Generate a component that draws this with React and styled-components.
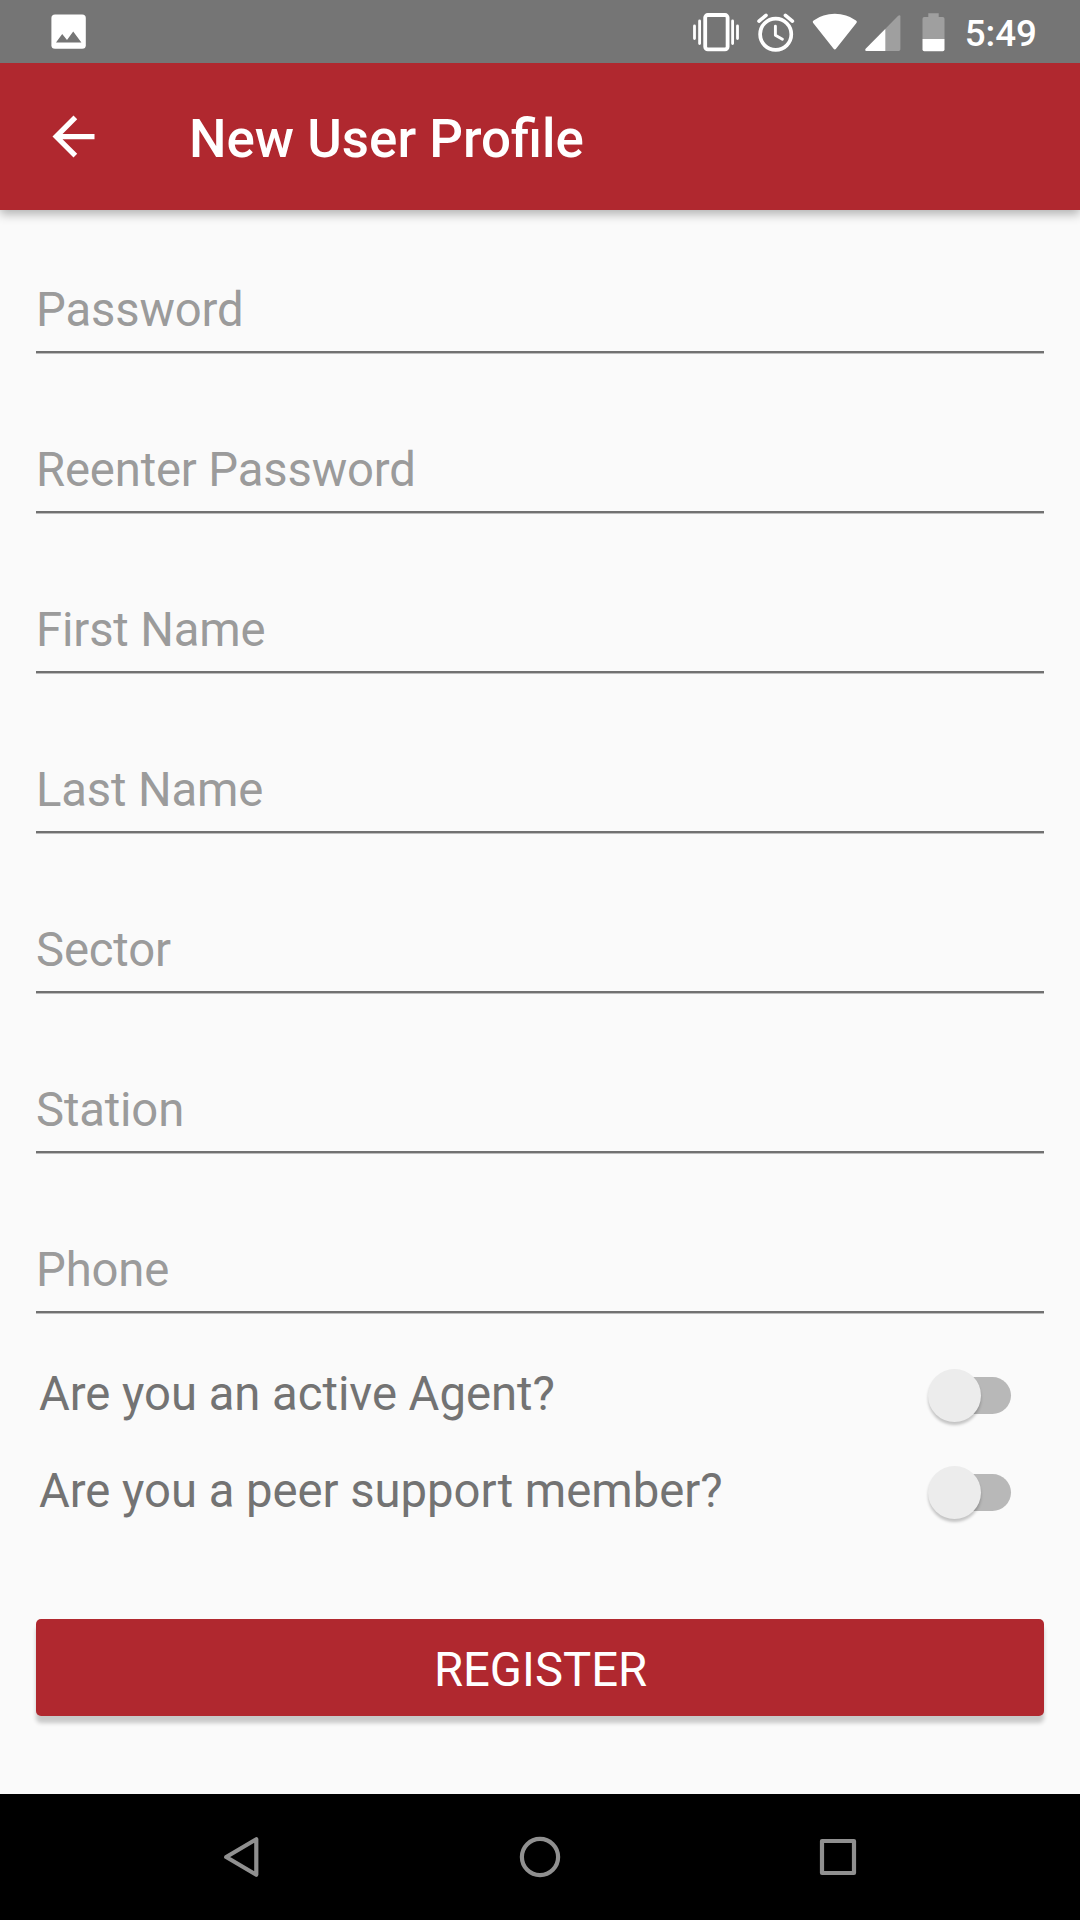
import React, { useState } from "react";
import styled, { createGlobalStyle } from "styled-components";

const GlobalStyle = createGlobalStyle`
  * {
    box-sizing: border-box;
  }

  body {
    margin: 0;
    background: #fafafa;
    font-family: Roboto, "Liberation Sans", sans-serif;
  }
`;

const Screen = styled.div`
  display: flex;
  flex-direction: column;
  width: 1080px;
  height: 1920px;
  overflow: hidden;
  background: #fafafa;
`;

const StatusBar = styled.div`
  position: relative;
  z-index: 1;
  display: flex;
  align-items: center;
  flex: none;
  height: 63px;
  padding: 0 43px 0 51px;
  background: #757575;

  svg {
    display: block;
    flex: none;
  }
`;

const StatusIcons = styled.div`
  display: flex;
  align-items: center;
  margin-left: auto;
`;

const AlarmSlot = styled.div`
  margin: 0 17px 0 18px;
`;

const SignalSlot = styled.div`
  margin: 0 21px 0 7px;
`;

const Clock = styled.span`
  margin-left: 20px;
  padding-top: 4px;
  color: #fff;
  font-size: 36.75px;
  font-weight: 500;
  line-height: 60px;
`;

const AppBar = styled.header`
  position: relative;
  display: flex;
  align-items: center;
  flex: none;
  height: 147px;
  padding-left: 42px;
  background: #b0282f;
  box-shadow: 0 4px 10px rgba(0, 0, 0, 0.3);
`;

const BackButton = styled.button`
  display: flex;
  width: 63px;
  height: 63px;
  padding: 0;
  border: none;
  background: transparent;
  cursor: pointer;
`;

const Title = styled.h1`
  margin: 0 0 0 84px;
  padding-top: 5px;
  color: #fff;
  font-size: 52.9px;
  font-weight: 500;
  line-height: 62px;
`;

const Form = styled.form`
  display: flex;
  flex-direction: column;
  flex: 1;
  padding: 54px 36px 0;
`;

const Fields = styled.div`
  display: flex;
  flex-direction: column;
  gap: 71px;
`;

const Field = styled.input`
  width: 100%;
  height: 89px;
  padding: 5px 0 0;
  border: none;
  border-bottom: 2px solid #717171;
  border-radius: 0;
  box-shadow: 0 1px 0 #bdbdbd;
  outline: none;
  background: transparent;
  color: #212121;
  font-family: inherit;
  font-size: 47.25px;
  letter-spacing: -0.16px;

  &::placeholder {
    color: #9b9b9b;
    opacity: 1;
  }
`;

const Toggles = styled.div`
  display: flex;
  flex-direction: column;
  gap: 13px;
  margin-top: 40px;
`;

const ToggleRow = styled.label`
  display: flex;
  align-items: center;
  justify-content: space-between;
  height: 84px;
  padding: 0 33px 0 3px;
`;

const ToggleLabel = styled.span`
  padding-bottom: 2px;
  color: #737373;
  font-size: 47.25px;
  line-height: 56px;
  letter-spacing: -0.03px;
`;

const Switch = styled.button`
  position: relative;
  width: 83px;
  height: 53px;
  padding: 0;
  border: none;
  background: transparent;
  cursor: pointer;

  &::before {
    content: "";
    position: absolute;
    top: 8px;
    left: 14px;
    right: 0;
    height: 37px;
    border-radius: 18.5px;
    background: ${(props) => (props.$on ? "#dc9a9e" : "#b8b8b8")};
  }

  &::after {
    content: "";
    position: absolute;
    top: 0;
    left: ${(props) => (props.$on ? "30px" : "0")};
    width: 53px;
    height: 53px;
    border-radius: 50%;
    background: ${(props) => (props.$on ? "#b0282f" : "#ececec")};
    box-shadow: 0 3px 3px rgba(0, 0, 0, 0.22);
  }
`;

const RegisterButton = styled.button`
  flex: none;
  height: 97px;
  margin-top: 85px;
  padding: 5px 0 0 1px;
  border: none;
  border-radius: 5px;
  background: #b0282f;
  box-shadow: 0 7px 4px rgba(0, 0, 0, 0.2);
  color: #fff;
  font-family: inherit;
  font-size: 47.25px;
  line-height: 56px;
  cursor: pointer;
`;

const NavBar = styled.nav`
  display: flex;
  align-items: center;
  justify-content: center;
  gap: 250px;
  flex: none;
  height: 126px;
  background: #000;
`;

const ImageIcon = () => (
  <svg width="35" height="35" viewBox="0 0 35 35">
    <rect x="0.4" y="0.4" width="34.4" height="34.4" rx="3.6" fill="#fff" />
    <path d="M5 28.4l6.2-8.4 4.8 6 6.2-8.6 8.2 11z" fill="#757575" />
  </svg>
);

const VibrateIcon = () => (
  <svg width="46" height="40" viewBox="0 0 46 40">
    <rect
      x="12.2"
      y="3"
      width="22.4"
      height="34.4"
      rx="2.6"
      fill="none"
      stroke="#fff"
      strokeWidth="3.8"
    />
    <path
      d="M1.5 14v12.6M6.6 9v22.6M39.6 9v22.6M44.5 14v12.6"
      stroke="#fff"
      strokeWidth="2.8"
      strokeLinecap="round"
    />
  </svg>
);

const AlarmIcon = () => (
  <svg width="38" height="40" viewBox="0 0 38 40">
    <g fill="none" stroke="#fff" strokeLinecap="round">
      <circle cx="18.7" cy="22.3" r="15.6" strokeWidth="3.7" />
      <path d="M2 9.2l7-5.9M28.4 3.3l7 5.9" strokeWidth="3.6" />
      <path d="M18.4 14.2v9l7 4.1" strokeWidth="2.9" strokeLinejoin="round" />
    </g>
  </svg>
);

const WifiIcon = () => (
  <svg width="46" height="40" viewBox="0 0 46 40">
    <path
      d="M1 10.8Q.2 9.4 1.6 8.4Q11 1.8 22.8 1.8Q34.6 1.8 44 8.4Q45.4 9.4 44.6 10.8L24.2 36.6Q22.8 38.4 21.4 36.6z"
      fill="#fff"
    />
  </svg>
);

const SignalIcon = () => (
  <svg width="36" height="40" viewBox="0 0 36 40">
    <path
      d="M.7 36.8L33.2 3.8Q35.4 2.2 35.4 4.6V37.2Q35.4 39 33.6 39H1.4Q-.4 38.6.7 36.8z"
      fill="#9f9f9f"
    />
    <path d="M.7 36.8L20.3 16.9V39H1.4Q-.4 38.6.7 36.8z" fill="#fff" />
  </svg>
);

const BatteryIcon = () => (
  <svg width="23" height="40" viewBox="0 0 23 40">
    <path
      d="M6.3 1.3h10.4V5h4q1.8 0 1.8 1.8V27H.5V6.8Q.5 5 2.3 5h4z"
      fill="#9f9f9f"
    />
    <path d="M.5 27h22v10.4q0 1.8-1.8 1.8H2.3Q.5 39.2.5 37.4z" fill="#fff" />
  </svg>
);

const ArrowBackIcon = () => (
  <svg width="63" height="63" viewBox="0 0 24 24">
    <path
      d="M20 11H7.83l5.59-5.59L12 4l-8 8 8 8 1.41-1.41L7.83 13H20z"
      fill="#fff"
    />
  </svg>
);

const NavIcon = ({ children }) => (
  <svg
    width="48"
    height="48"
    viewBox="0 0 48 48"
    fill="none"
    stroke="#909090"
    strokeWidth="4.2"
    strokeLinejoin="round"
  >
    {children}
  </svg>
);

const fields = [
  { name: "password", label: "Password", type: "password" },
  { name: "password2", label: "Reenter Password", type: "password" },
  { name: "firstName", label: "First Name", type: "text" },
  { name: "lastName", label: "Last Name", type: "text" },
  { name: "sector", label: "Sector", type: "text" },
  { name: "station", label: "Station", type: "text" },
  { name: "phone", label: "Phone", type: "tel" },
];

const App = () => {
  const [activeAgent, setActiveAgent] = useState(false);
  const [peerSupport, setPeerSupport] = useState(false);

  return (
    <>
      <GlobalStyle />
      <Screen>
        <StatusBar>
          <ImageIcon />
          <StatusIcons>
            <VibrateIcon />
            <AlarmSlot>
              <AlarmIcon />
            </AlarmSlot>
            <WifiIcon />
            <SignalSlot>
              <SignalIcon />
            </SignalSlot>
            <BatteryIcon />
            <Clock>5:49</Clock>
          </StatusIcons>
        </StatusBar>

        <AppBar>
          <BackButton type="button">
            <ArrowBackIcon />
          </BackButton>
          <Title>New User Profile</Title>
        </AppBar>

        <Form onSubmit={(e) => e.preventDefault()}>
          <Fields>
            {fields.map((field) => (
              <Field
                key={field.name}
                name={field.name}
                type={field.type}
                placeholder={field.label}
              />
            ))}
          </Fields>
          <Toggles>
            <ToggleRow>
              <ToggleLabel>Are you an active Agent?</ToggleLabel>
              <Switch
                type="button"
                $on={activeAgent}
                onClick={() => setActiveAgent(!activeAgent)}
              />
            </ToggleRow>
            <ToggleRow>
              <ToggleLabel>Are you a peer support member?</ToggleLabel>
              <Switch
                type="button"
                $on={peerSupport}
                onClick={() => setPeerSupport(!peerSupport)}
              />
            </ToggleRow>
          </Toggles>
          <RegisterButton type="submit">REGISTER</RegisterButton>
        </Form>

        <NavBar>
          <NavIcon>
            <path d="M8.2 24L38.3 6.2V41.8z" />
          </NavIcon>
          <NavIcon>
            <circle cx="24" cy="24" r="18.1" />
          </NavIcon>
          <NavIcon>
            <rect x="8" y="8" width="32" height="32" />
          </NavIcon>
        </NavBar>
      </Screen>
    </>
  );
};

export default App;
